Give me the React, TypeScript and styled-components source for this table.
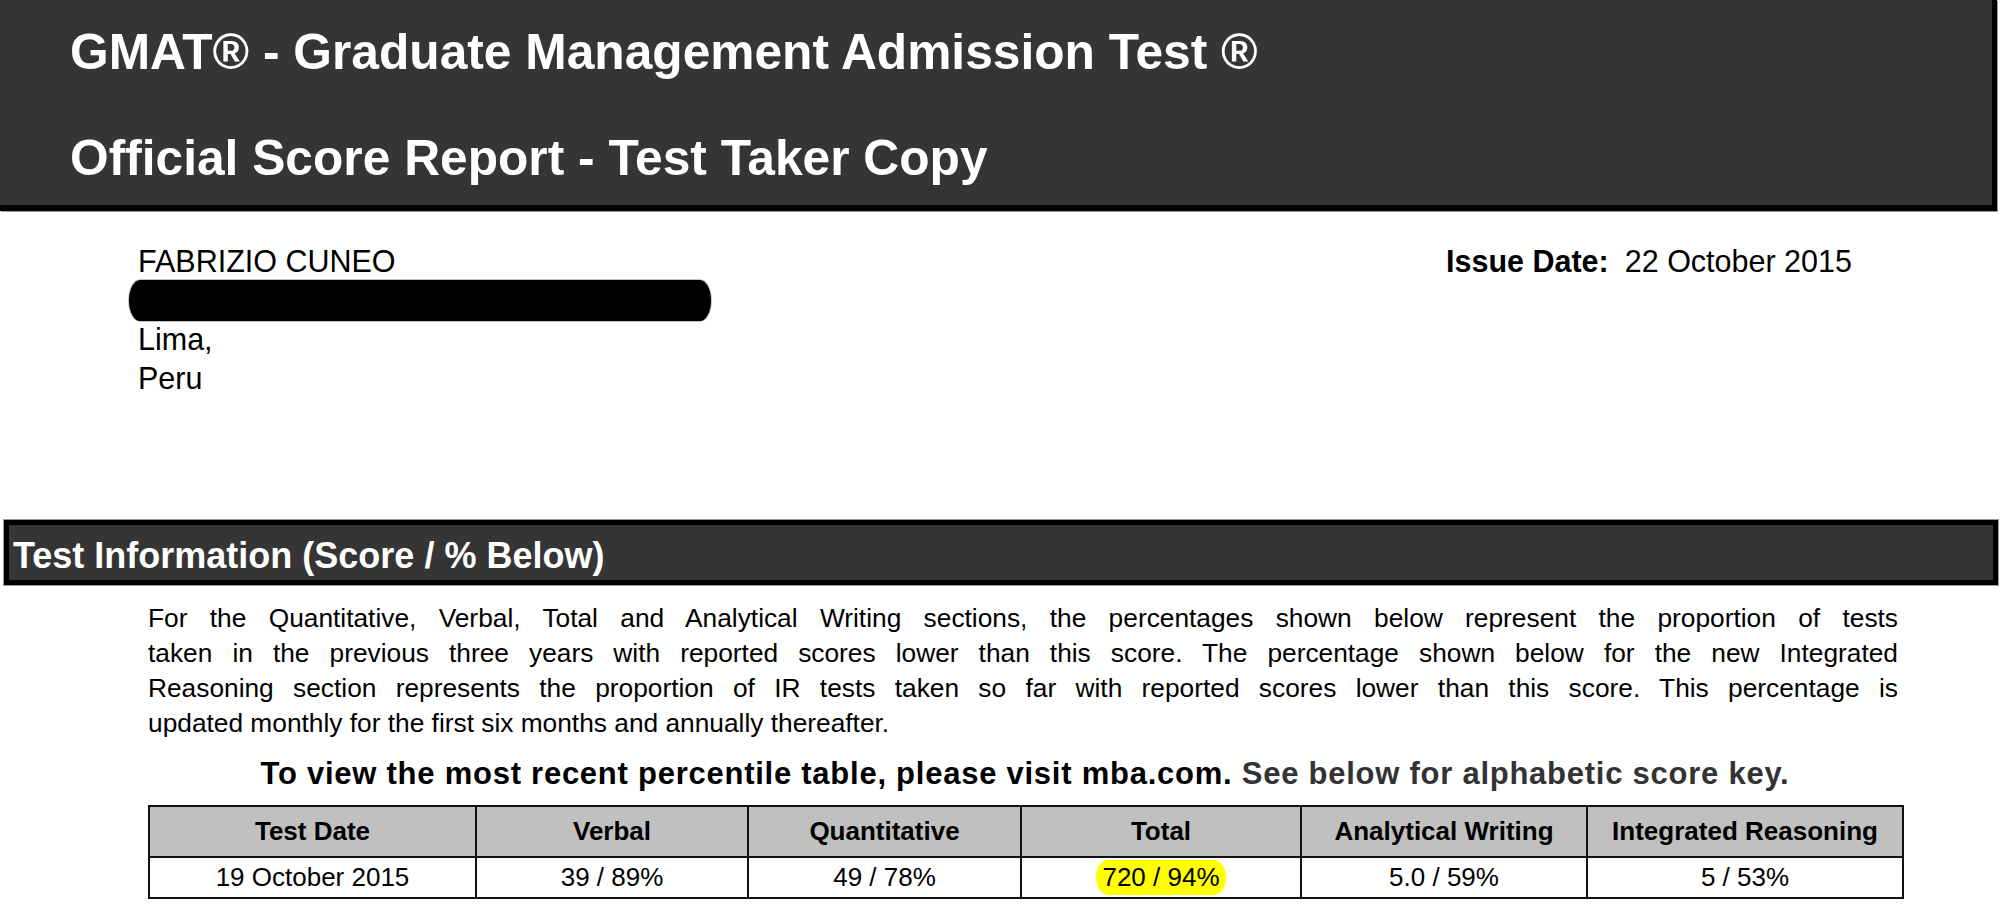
import React from 'react';
import styled, { createGlobalStyle } from 'styled-components';

const GlobalStyle = createGlobalStyle`
  html, body {
    margin: 0;
    padding: 0;
    background: #fff;
  }
  body {
    font-family: "Liberation Sans", Arial, sans-serif;
    color: #000;
  }
`;

const Page = styled.div`
  width: 2006px;
  min-height: 907px;
  overflow: hidden;
`;

const Masthead = styled.header`
  width: 1922px;
  height: 205px;
  padding-left: 70px;
  box-sizing: content-box;
  background: #353535;
  border-right: 5px solid #000;
  border-bottom: 6px solid #000;
  box-shadow: 1px 1px 0 #9a9a9a;
  overflow: hidden;
`;

const MastTitle = styled.h1`
  margin: 0;
  font-size: 49.7px;
  font-weight: 700;
  line-height: 106px;
  color: #fff;
  white-space: nowrap;

  &:first-child {
    margin-top: -1px;
  }
`;

const AddressSection = styled.section`
  display: grid;
  grid-template-columns: 1308px auto;
  padding: 31px 0 0 138px;
  font-size: 30.5px;
  line-height: 39px;
`;

const AddressBlock = styled.div`
  display: flex;
  flex-direction: column;
`;

const AddressLine = styled.div`
  white-space: nowrap;
`;

const Redaction = styled.div`
  width: 582px;
  height: 41px;
  margin: -1px 0 -1px -9px;
  background: #000;
  border-radius: 11px / 50%;
  box-shadow: 0 0 0 1px #c4c4c4;
`;

const IssueDate = styled.div`
  display: flex;
  gap: 16px;
  white-space: nowrap;
`;

const IssueLabel = styled.span`
  font-weight: 700;
`;

const SectionBar = styled.div`
  margin: 122px 0 0 4px;
  width: 1980px;
  height: 55px;
  padding-left: 4px;
  box-sizing: content-box;
  background: #353535;
  border: 5px solid #000;
  box-shadow: 0 0 0 1px #9a9a9a;
  color: #fff;
  font-size: 36px;
  font-weight: 700;
  line-height: 61px;
  white-space: nowrap;
  overflow: hidden;
`;

const Content = styled.div`
  margin-left: 148px;
  width: 1754px;
`;

const Notice = styled.p`
  margin: 16px 4px 0 0;
  font-size: 26.3px;
  line-height: 35px;
`;

const NoticeLine = styled.span<{ $last?: boolean }>`
  display: block;
  text-align: justify;
  text-align-last: ${(p) => (p.$last ? 'left' : 'justify')};
`;

const Callout = styled.div`
  margin-top: 16px;
  font-size: 31px;
  line-height: 34px;
  letter-spacing: 0.75px;
  font-weight: 700;
  text-align: center;
  white-space: nowrap;
`;

const Muted = styled.span`
  color: #333;
`;

const ScoreTable = styled.table`
  margin-top: 14px;
  width: 1754px;
  table-layout: fixed;
  border-collapse: collapse;
  border: 2px solid #111;
  font-size: 26px;
`;

const HeadCell = styled.th`
  height: 49px;
  padding: 0;
  background: #c0c0c0;
  border: 2px solid #111;
  font-weight: 700;
  text-align: center;
  vertical-align: middle;
  white-space: nowrap;
`;

const Cell = styled.td`
  height: 39px;
  padding: 0;
  border: 2px solid #111;
  text-align: center;
  vertical-align: middle;
  white-space: nowrap;
`;

const Highlight = styled.span`
  display: inline-block;
  padding: 3px 6px;
  line-height: 29px;
  background: #ffff00;
  border-radius: 12px / 50%;
`;

const noticeLines = [
  'For the Quantitative, Verbal, Total and Analytical Writing sections, the percentages shown below represent the proportion of tests',
  'taken in the previous three years with reported scores lower than this score. The percentage shown below for the new Integrated',
  'Reasoning section represents the proportion of IR tests taken so far with reported scores lower than this score. This percentage is',
  'updated monthly for the first six months and annually thereafter.',
];

const columns = [
  { label: 'Test Date', width: 327 },
  { label: 'Verbal', width: 272 },
  { label: 'Quantitative', width: 273 },
  { label: 'Total', width: 280 },
  { label: 'Analytical Writing', width: 286 },
  { label: 'Integrated Reasoning', width: 316 },
];

const scores: { value: string; highlight?: boolean }[] = [
  { value: '19 October 2015' },
  { value: '39 / 89%' },
  { value: '49 / 78%' },
  { value: '720 / 94%', highlight: true },
  { value: '5.0 / 59%' },
  { value: '5 / 53%' },
];

export default function App() {
  return (
    <Page>
      <GlobalStyle />
      <Masthead>
        <MastTitle>GMAT® - Graduate Management Admission Test ®</MastTitle>
        <MastTitle>Official Score Report - Test Taker Copy</MastTitle>
      </Masthead>

      <AddressSection>
        <AddressBlock>
          <AddressLine>FABRIZIO CUNEO</AddressLine>
          <Redaction />
          <AddressLine>Lima,</AddressLine>
          <AddressLine>Peru</AddressLine>
        </AddressBlock>
        <IssueDate>
          <IssueLabel>Issue Date:</IssueLabel>
          <span>22 October 2015</span>
        </IssueDate>
      </AddressSection>

      <SectionBar>Test Information (Score / % Below)</SectionBar>

      <Content>
        <Notice>
          {noticeLines.map((line, i) => (
            <NoticeLine key={i} $last={i === noticeLines.length - 1}>
              {line}
            </NoticeLine>
          ))}
        </Notice>
        <Callout>
          To view the most recent percentile table, please visit mba.com.{' '}
          <Muted>See below for alphabetic score key.</Muted>
        </Callout>
        <ScoreTable>
          <colgroup>
            {columns.map((c) => (
              <col key={c.label} style={{ width: c.width }} />
            ))}
          </colgroup>
          <thead>
            <tr>
              {columns.map((c) => (
                <HeadCell key={c.label}>{c.label}</HeadCell>
              ))}
            </tr>
          </thead>
          <tbody>
            <tr>
              {scores.map((s, i) => (
                <Cell key={i}>{s.highlight ? <Highlight>{s.value}</Highlight> : s.value}</Cell>
              ))}
            </tr>
          </tbody>
        </ScoreTable>
      </Content>
    </Page>
  );
}
